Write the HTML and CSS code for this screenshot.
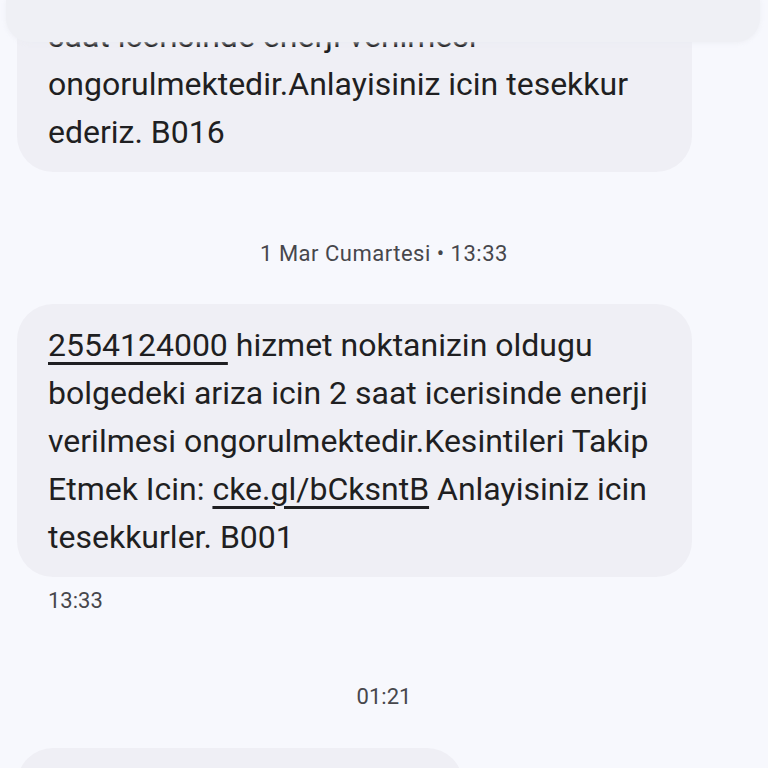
FILE: index.html
```html
<!DOCTYPE html>
<html lang="tr">
<head>
<meta charset="utf-8">
<title>Mesajlar</title>
<link rel="stylesheet" href="styles.css">
</head>
<body>
<div class="screen">
  <div class="topbar"></div>
  <div class="thread">
    <div class="bubble">
      noktanizin oldugu bolgedeki ariza icin 2<br>
      saat icerisinde enerji verilmesi<br>
      ongorulmektedir.Anlayisiniz icin tesekkur<br>
      ederiz. B016
    </div>
    <div class="stamp">1 Mar Cumartesi • 13:33</div>
    <div class="bubble">
      <span class="link">2554124000</span> hizmet noktanizin oldugu<br>
      bolgedeki ariza icin 2 saat icerisinde enerji<br>
      verilmesi ongorulmektedir.Kesintileri Takip<br>
      Etmek Icin: <span class="link">cke.gl/bCksntB</span> Anlayisiniz icin<br>
      tesekkurler. B001
    </div>
    <div class="meta">13:33</div>
    <div class="stamp stamp-late">01:21</div>
    <div class="bubble bubble-short"></div>
  </div>
</div>
</body>
</html>
```
FILE: styles.css
```css
html, body {
  margin: 0;
  padding: 0;
  background: #f7f8fd;
}
.screen {
  position: relative;
  width: 768px;
  height: 768px;
  overflow: hidden;
  font-family: Roboto, "Noto Sans", sans-serif;
  color: #1f1f22;
}
.topbar {
  position: absolute;
  top: 0;
  left: 6px;
  right: 8px;
  height: 42px;
  background: #eff0f5;
  border-radius: 0 0 24px 24px;
  box-shadow: 0 1px 4px rgba(235, 236, 242, 0.8);
  z-index: 2;
}
.thread {
  display: flex;
  flex-direction: column;
  align-items: flex-start;
  margin-top: -53px;
  padding: 0 76px 0 17px;
}
.bubble {
  box-sizing: border-box;
  width: 675px;
  background: #efeff5;
  border-radius: 36px;
  padding: 17px 20px 16px 31px;
  font-size: 32px;
  line-height: 48px;
  letter-spacing: 0;
  white-space: nowrap;
}
.bubble-short {
  width: 446px;
  height: 80px;
  margin-top: 35px;
}
.link {
  text-decoration: underline;
  text-decoration-thickness: 3px;
  text-underline-offset: 6px;
}
.stamp {
  align-self: stretch;
  margin: 66px -76px 34px -17px;
  text-align: center;
  font-size: 22px;
  line-height: 32px;
  letter-spacing: 0.5px;
  color: #47474c;
}
.stamp-late {
  margin-top: 64px;
  margin-bottom: 0;
  letter-spacing: 0;
}
.meta {
  margin: 8px 0 0 31px;
  font-size: 22px;
  line-height: 32px;
  color: #47474c;
}
```
